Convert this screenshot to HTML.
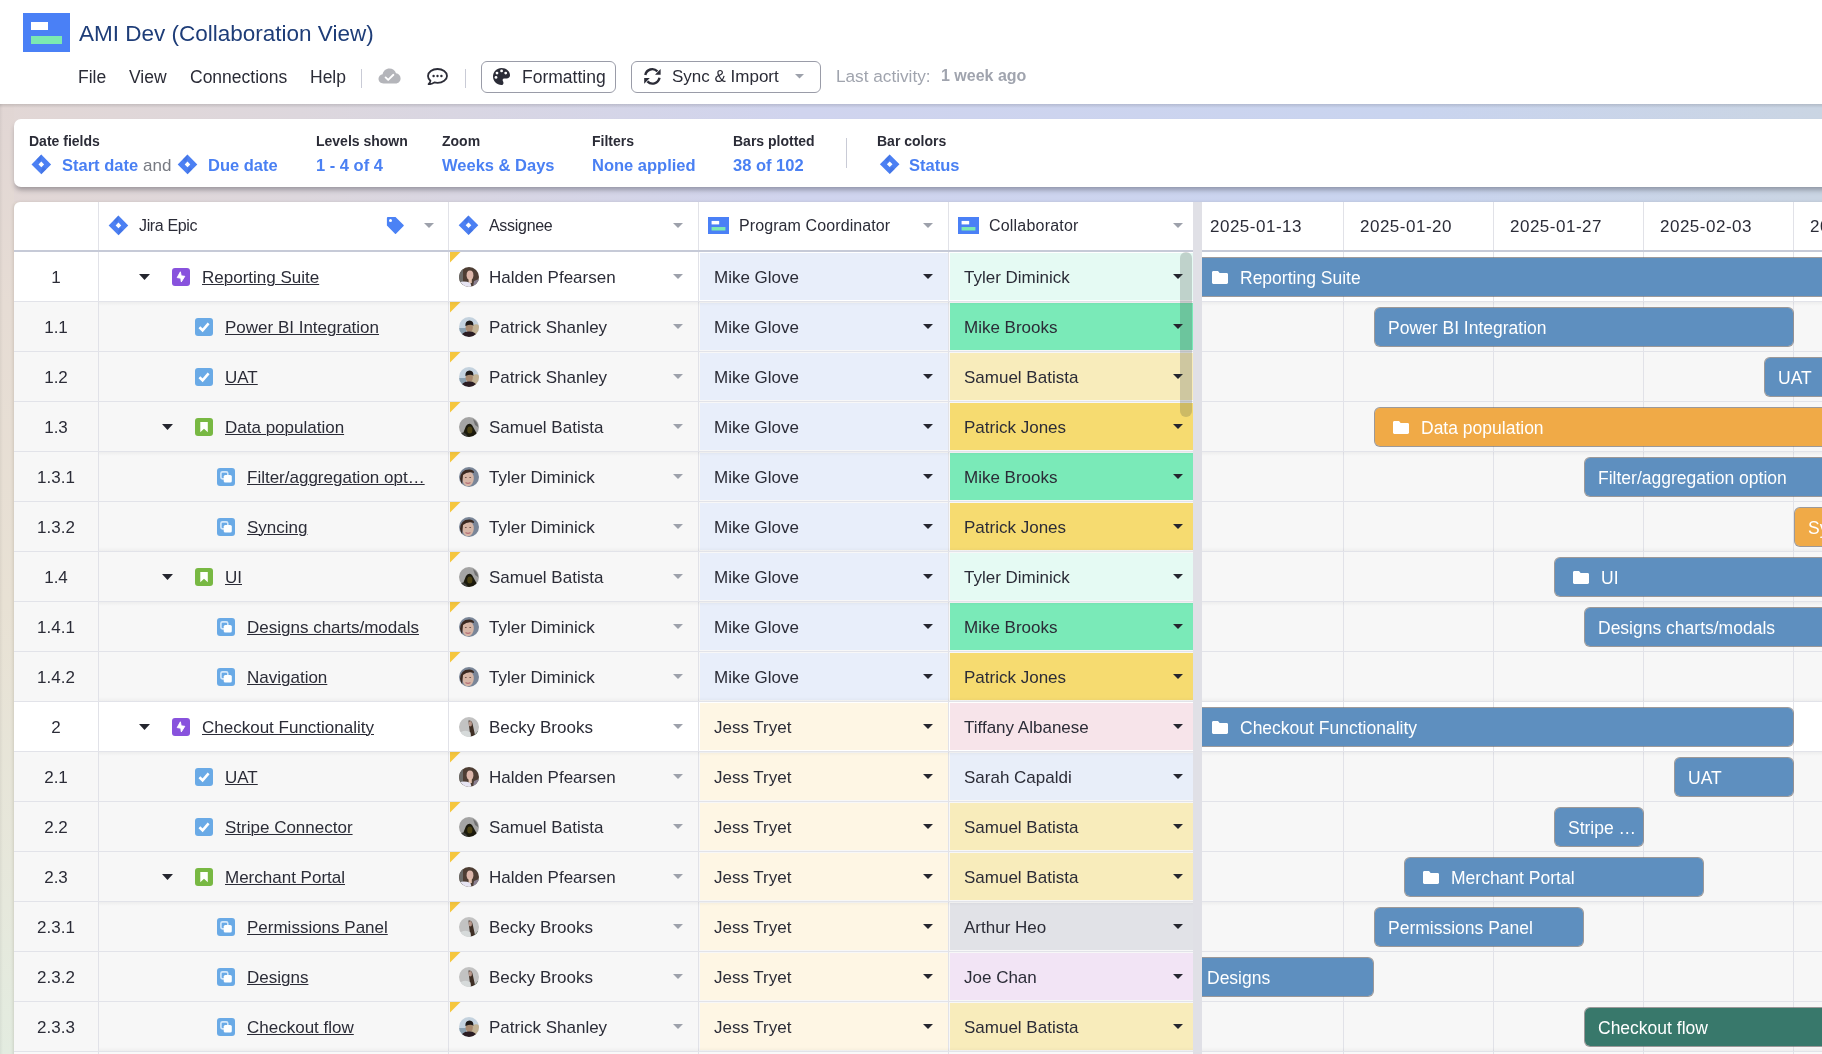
<!DOCTYPE html><html><head><meta charset="utf-8"><style>
*{box-sizing:border-box;margin:0;padding:0}
html,body{width:1822px;height:1054px;overflow:hidden;background:#fff;font-family:"Liberation Sans", sans-serif;color:#2b2c37}
#root{position:absolute;left:0;top:0;width:1822px;height:1054px;overflow:hidden;will-change:transform}
.abs{position:absolute}
.t{position:absolute;white-space:nowrap}
</style></head><body><div id="root"><div class="abs" style="left:0;top:104px;width:1822px;height:950px;background:linear-gradient(180deg,#e4d9d6 0px,#e7ddd5 200px,#e8e1d4 500px,#e6e8dc 800px,#e3ece0 950px)"></div><div class="abs" style="left:0;top:104px;width:1822px;height:98px;background:linear-gradient(90deg,#e2d7d5 0px,#ddd7dd 300px,#d0d4ee 800px,#c9d4ef 1400px,#cad5e3 1822px)"></div><div class="abs" style="left:0;top:104px;width:14px;height:950px;background:linear-gradient(180deg,#e1d6d4 0px,#e6dcd4 200px,#e8e1d4 500px,#e6e8dc 800px,#e3ece0 950px)"></div><div class="abs" style="left:0;top:104px;width:3px;height:950px;background:linear-gradient(90deg,rgba(0,0,0,.05),rgba(0,0,0,0))"></div><div class="abs" style="left:0;top:104px;width:1822px;height:4px;background:linear-gradient(180deg,rgba(0,0,0,.12),rgba(0,0,0,0))"></div><svg style="position:absolute;left:23px;top:13px" width="47" height="39" viewBox="0 0 47 39" preserveAspectRatio="none"><rect width="47" height="39" fill="#4a80f6"/><rect x="8" y="9" width="17" height="8" fill="#fff"/><rect x="8" y="23" width="31" height="8" fill="#7be9b2"/></svg><div class="t" style="left:79px;top:21px;font-size:22.5px;line-height:26px;color:#1e3d78">AMI Dev (Collaboration View)</div><div class="t" style="left:78px;top:67px;font-size:17.5px;line-height:20px;color:#2b2c37">File</div><div class="t" style="left:129px;top:67px;font-size:17.5px;line-height:20px;color:#2b2c37">View</div><div class="t" style="left:190px;top:67px;font-size:17.5px;line-height:20px;color:#2b2c37">Connections</div><div class="t" style="left:310px;top:67px;font-size:17.5px;line-height:20px;color:#2b2c37">Help</div><div class="abs" style="left:361px;top:69px;width:1px;height:19px;background:#c9cbd6"></div><div class="abs" style="left:465px;top:69px;width:1px;height:19px;background:#c9cbd6"></div><svg style="position:absolute;left:378px;top:68px" width="23" height="16" viewBox="0 0 23 16"><path d="M5.5 15.5 C2.5 15.5 0.5 13.4 0.5 10.8 C0.5 8.4 2.3 6.5 4.6 6.2 C5.2 2.9 8 0.5 11.4 0.5 C14.5 0.5 17.1 2.5 18 5.3 C20.7 5.6 22.6 7.8 22.6 10.5 C22.6 13.3 20.4 15.5 17.6 15.5 Z" fill="#b4b5ba"/><path d="M7.6 9.4 L10.2 11.9 L15.4 6.8" stroke="#fff" stroke-width="1.9" fill="none" stroke-linecap="round" stroke-linejoin="round"/></svg><svg style="position:absolute;left:427px;top:68px" width="21" height="17" viewBox="0 0 21 17"><path d="M10.5 1 C15.7 1 20 4.1 20 7.9 C20 11.7 15.7 14.8 10.5 14.8 C9.4 14.8 8.4 14.7 7.4 14.4 C6 15.5 3.9 16.2 1.6 16.2 C2.6 15.2 3.2 14.1 3.4 12.8 C1.9 11.5 1 9.8 1 7.9 C1 4.1 5.3 1 10.5 1 Z" fill="none" stroke="#2b2c37" stroke-width="1.8" stroke-linejoin="round"/><circle cx="6.6" cy="8" r="1.2" fill="#2b2c37"/><circle cx="10.5" cy="8" r="1.2" fill="#2b2c37"/><circle cx="14.4" cy="8" r="1.2" fill="#2b2c37"/></svg><div class="abs" style="left:481px;top:61px;width:135px;height:32px;border:1px solid #9a9ca8;border-radius:6px"></div><svg style="position:absolute;left:488px;top:63px" width="28" height="28" viewBox="0 0 28 28"><path d="M13.5 4.9 C18.5 4.9 22 8.3 22 12.3 C22 14.2 20.6 15.4 18.6 15.4 L16.4 15.4 C15.3 15.4 14.6 16.1 14.6 17.1 C14.6 17.6 14.9 18 15.1 18.5 C15.3 19 15.5 19.4 15.5 19.9 C15.5 21.1 14.6 22 13.5 22 C8.8 22 5 18.2 5 13.5 C5 8.8 8.8 4.9 13.5 4.9 Z" fill="#2b2c37"/><circle cx="13.6" cy="7.9" r="1.4" fill="#fff"/><circle cx="9" cy="10.1" r="1.4" fill="#fff"/><circle cx="8" cy="14.4" r="1.4" fill="#fff"/><circle cx="17.7" cy="10.1" r="1.4" fill="#fff"/></svg><div class="t" style="left:522px;top:67px;font-size:17.5px;line-height:20px;color:#2b2c37">Formatting</div><div class="abs" style="left:631px;top:61px;width:190px;height:32px;border:1px solid #9a9ca8;border-radius:6px"></div><svg style="position:absolute;left:638px;top:63px" width="28" height="28" viewBox="0 0 28 28"><path d="M7.3 12.0 A7.1 7.1 0 0 1 19.4 8.4" fill="none" stroke="#2b2c37" stroke-width="2.4"/><path d="M22.6 6.1 L22.6 11.7 L17.0 11.7 Z" fill="#2b2c37"/><path d="M21.5 14.8 A7.1 7.1 0 0 1 9.4 18.4" fill="none" stroke="#2b2c37" stroke-width="2.4"/><path d="M6.2 20.7 L6.2 15.1 L11.8 15.1 Z" fill="#2b2c37"/></svg><div class="t" style="left:672px;top:67px;font-size:17px;line-height:20px;color:#2b2c37">Sync &amp; Import</div><svg style="position:absolute;left:795px;top:74px" width="9" height="4.5" viewBox="0 0 10 5" preserveAspectRatio="none"><path d="M0 0H10L5 5Z" fill="#9da1ab"/></svg><div class="t" style="left:836px;top:66px;font-size:17.2px;line-height:20px;color:#a0a4ae">Last activity:</div><div class="t" style="left:941px;top:66px;font-size:16px;line-height:20px;color:#a0a4ae;font-weight:bold">1 week ago</div><div class="abs" style="left:14px;top:119px;width:1900px;height:68px;background:#fff;border-radius:7px;box-shadow:0 4px 5px -1px rgba(30,30,40,.34)"></div><div class="t" style="left:29px;top:132px;font-size:14px;line-height:18px;font-weight:bold;color:#2b2c37">Date fields</div><svg style="position:absolute;left:31px;top:154px" width="21" height="21" viewBox="0 0 21 21"><path d="M10.3 0.5999999999999996 L20.1 10.4 L10.3 20.200000000000003 L0.5 10.4 Z M10.3 7.6000000000000005 L7.500000000000001 10.4 L10.3 13.2 L13.100000000000001 10.4 Z" fill="#4c80f3" fill-rule="evenodd"/><path d="M10.3 0.5999999999999996 L5.4 5.5 L7.9 8.0 L10.3 5.6000000000000005Z" fill="#3a68d8" opacity=".45"/><path d="M10.3 20.200000000000003 L15.200000000000001 15.3 L12.700000000000001 12.8 L10.3 15.2Z" fill="#3a68d8" opacity=".45"/></svg><div class="t" style="left:62px;top:155px;font-size:16.5px;line-height:20px;font-weight:bold;color:#4a80f3">Start date</div><div class="t" style="left:143px;top:156px;font-size:17px;line-height:20px;color:#777a82">and</div><svg style="position:absolute;left:177px;top:154px" width="21" height="21" viewBox="0 0 21 21"><path d="M10.5 0.5999999999999996 L20.3 10.4 L10.5 20.200000000000003 L0.6999999999999993 10.4 Z M10.5 7.6000000000000005 L7.7 10.4 L10.5 13.2 L13.3 10.4 Z" fill="#4c80f3" fill-rule="evenodd"/><path d="M10.5 0.5999999999999996 L5.6 5.5 L8.1 8.0 L10.5 5.6000000000000005Z" fill="#3a68d8" opacity=".45"/><path d="M10.5 20.200000000000003 L15.4 15.3 L12.9 12.8 L10.5 15.2Z" fill="#3a68d8" opacity=".45"/></svg><div class="t" style="left:208px;top:155px;font-size:16.5px;line-height:20px;font-weight:bold;color:#4a80f3">Due date</div><div class="t" style="left:316px;top:132px;font-size:14px;line-height:18px;font-weight:bold;color:#2b2c37">Levels shown</div><div class="t" style="left:316px;top:155px;font-size:16.5px;line-height:20px;font-weight:bold;color:#4a80f3">1 - 4 of 4</div><div class="t" style="left:442px;top:132px;font-size:14px;line-height:18px;font-weight:bold;color:#2b2c37">Zoom</div><div class="t" style="left:442px;top:155px;font-size:16.5px;line-height:20px;font-weight:bold;color:#4a80f3">Weeks &amp; Days</div><div class="t" style="left:592px;top:132px;font-size:14px;line-height:18px;font-weight:bold;color:#2b2c37">Filters</div><div class="t" style="left:592px;top:155px;font-size:16.5px;line-height:20px;font-weight:bold;color:#4a80f3">None applied</div><div class="t" style="left:733px;top:132px;font-size:14px;line-height:18px;font-weight:bold;color:#2b2c37">Bars plotted</div><div class="t" style="left:733px;top:155px;font-size:16.5px;line-height:20px;font-weight:bold;color:#4a80f3">38 of 102</div><div class="abs" style="left:846px;top:138px;width:1px;height:30px;background:#c9cbd6"></div><div class="t" style="left:877px;top:132px;font-size:14px;line-height:18px;font-weight:bold;color:#2b2c37">Bar colors</div><svg style="position:absolute;left:879px;top:154px" width="21" height="21" viewBox="0 0 21 21"><path d="M10.7 0.5 L20.5 10.3 L10.7 20.1 L0.8999999999999986 10.3 Z M10.7 7.500000000000001 L7.8999999999999995 10.3 L10.7 13.100000000000001 L13.5 10.3 Z" fill="#4c80f3" fill-rule="evenodd"/><path d="M10.7 0.5 L5.799999999999999 5.4 L8.299999999999999 7.9 L10.7 5.500000000000001Z" fill="#3a68d8" opacity=".45"/><path d="M10.7 20.1 L15.6 15.200000000000001 L13.1 12.700000000000001 L10.7 15.100000000000001Z" fill="#3a68d8" opacity=".45"/></svg><div class="t" style="left:909px;top:155px;font-size:16.5px;line-height:20px;font-weight:bold;color:#4a80f3">Status</div><div class="abs" style="left:14px;top:202px;width:1900px;height:900px;background:#fff;border-radius:6px 6px 0 0;box-shadow:-1px 0 3px rgba(40,30,20,.12)"></div><div class="abs" style="left:14px;top:250px;width:1179px;height:2px;background:#c6cad7"></div><div class="abs" style="left:1202px;top:250px;width:620px;height:2px;background:#c6cad7"></div><div class="abs" style="left:98px;top:202px;width:1px;height:48px;background:#e1e2e8"></div><div class="abs" style="left:448px;top:202px;width:1px;height:48px;background:#e1e2e8"></div><div class="abs" style="left:698px;top:202px;width:1px;height:48px;background:#e1e2e8"></div><div class="abs" style="left:948px;top:202px;width:1px;height:48px;background:#e1e2e8"></div><svg style="position:absolute;left:108px;top:215px" width="21" height="21" viewBox="0 0 21 21"><path d="M10.45 0.5999999999999996 L20.25 10.4 L10.45 20.200000000000003 L0.6499999999999986 10.4 Z M10.45 7.6000000000000005 L7.6499999999999995 10.4 L10.45 13.2 L13.25 10.4 Z" fill="#4c80f3" fill-rule="evenodd"/><path d="M10.45 0.5999999999999996 L5.549999999999999 5.5 L8.049999999999999 8.0 L10.45 5.6000000000000005Z" fill="#3a68d8" opacity=".45"/><path d="M10.45 20.200000000000003 L15.35 15.3 L12.85 12.8 L10.45 15.2Z" fill="#3a68d8" opacity=".45"/></svg><div class="t" style="left:139px;top:216px;font-size:16px;letter-spacing:-0.35px;line-height:19px;color:#2b2c37">Jira Epic</div><svg style="position:absolute;left:386px;top:216px" width="19" height="19" viewBox="0 0 19 19"><path d="M0.9 1.9 Q0.9 0.9 1.9 0.9 L9.5 0.9 L17.6 9 Q18.1 9.5 17.6 10 L10 17.7 Q9.5 18.2 9 17.7 L0.9 9.5 Z" fill="#4b82f5"/><circle cx="4.5" cy="4.5" r="1.5" fill="#fff"/></svg><svg style="position:absolute;left:424px;top:223px" width="10" height="5" viewBox="0 0 10 5" preserveAspectRatio="none"><path d="M0 0H10L5 5Z" fill="#9da1ab"/></svg><svg style="position:absolute;left:458px;top:215px" width="21" height="21" viewBox="0 0 21 21"><path d="M10.5 0.5 L20.3 10.3 L10.5 20.1 L0.6999999999999993 10.3 Z M10.5 7.500000000000001 L7.7 10.3 L10.5 13.100000000000001 L13.3 10.3 Z" fill="#4c80f3" fill-rule="evenodd"/><path d="M10.5 0.5 L5.6 5.4 L8.1 7.9 L10.5 5.500000000000001Z" fill="#3a68d8" opacity=".45"/><path d="M10.5 20.1 L15.4 15.200000000000001 L12.9 12.700000000000001 L10.5 15.100000000000001Z" fill="#3a68d8" opacity=".45"/></svg><div class="t" style="left:489px;top:216px;font-size:16px;letter-spacing:-0.3px;line-height:19px;color:#2b2c37">Assignee</div><svg style="position:absolute;left:673px;top:223px" width="10" height="5" viewBox="0 0 10 5" preserveAspectRatio="none"><path d="M0 0H10L5 5Z" fill="#9da1ab"/></svg><svg style="position:absolute;left:708px;top:217px" width="21" height="17" viewBox="0 0 47 39" preserveAspectRatio="none"><rect width="47" height="39" fill="#4a80f6"/><rect x="8" y="9" width="17" height="8" fill="#fff"/><rect x="8" y="23" width="31" height="8" fill="#7be9b2"/></svg><div class="t" style="left:739px;top:216px;font-size:16px;letter-spacing:0.1px;line-height:19px;color:#2b2c37">Program Coordinator</div><svg style="position:absolute;left:923px;top:223px" width="10" height="5" viewBox="0 0 10 5" preserveAspectRatio="none"><path d="M0 0H10L5 5Z" fill="#9da1ab"/></svg><svg style="position:absolute;left:958px;top:217px" width="21" height="17" viewBox="0 0 47 39" preserveAspectRatio="none"><rect width="47" height="39" fill="#4a80f6"/><rect x="8" y="9" width="17" height="8" fill="#fff"/><rect x="8" y="23" width="31" height="8" fill="#7be9b2"/></svg><div class="t" style="left:989px;top:216px;font-size:16px;letter-spacing:0.2px;line-height:19px;color:#2b2c37">Collaborator</div><svg style="position:absolute;left:1173px;top:223px" width="10" height="5" viewBox="0 0 10 5" preserveAspectRatio="none"><path d="M0 0H10L5 5Z" fill="#9da1ab"/></svg><div class="t" style="left:1210px;top:217px;font-size:17px;letter-spacing:0.5px;line-height:20px;color:#2b2c37">2025-01-13</div><div class="t" style="left:1360px;top:217px;font-size:17px;letter-spacing:0.5px;line-height:20px;color:#2b2c37">2025-01-20</div><div class="abs" style="left:1343px;top:202px;width:1px;height:48px;background:#e1e2e8"></div><div class="t" style="left:1510px;top:217px;font-size:17px;letter-spacing:0.5px;line-height:20px;color:#2b2c37">2025-01-27</div><div class="abs" style="left:1493px;top:202px;width:1px;height:48px;background:#e1e2e8"></div><div class="t" style="left:1660px;top:217px;font-size:17px;letter-spacing:0.5px;line-height:20px;color:#2b2c37">2025-02-03</div><div class="abs" style="left:1643px;top:202px;width:1px;height:48px;background:#e1e2e8"></div><div class="t" style="left:1810px;top:217px;font-size:17px;letter-spacing:0.5px;line-height:20px;color:#2b2c37">2025-02-10</div><div class="abs" style="left:1793px;top:202px;width:1px;height:48px;background:#e1e2e8"></div><svg width="0" height="0" style="position:absolute"><defs>
<clipPath id="avc"><circle cx="10" cy="10" r="10"/></clipPath>
<symbol id="av0" viewBox="0 0 20 20"><g clip-path="url(#avc)"><rect width="20" height="20" fill="#4e3e34"/><rect x="0" y="0" width="4" height="20" fill="#6a6a68"/><ellipse cx="11" cy="8.2" rx="3.4" ry="4.6" fill="#dcb6aa"/><rect x="9.6" y="11" width="3.2" height="5" fill="#e2c0ac"/><path d="M0 15.5 Q5 13.5 11.5 16 L12.5 20 H0 Z" fill="#e6e4f2"/><path d="M15 14 L20 12 V20 H14Z" fill="#8a8090"/></g></symbol>
<symbol id="av1" viewBox="0 0 20 20"><g clip-path="url(#avc)"><rect width="20" height="20" fill="#c4d2de"/><path d="M11 20 L13 9 Q16 6 20 8 V20Z" fill="#c2b294"/><rect x="0" y="11" width="7" height="9" fill="#8aa0b0"/><ellipse cx="10.2" cy="10.6" rx="3.6" ry="4.4" fill="#a88a70"/><path d="M6.4 9 Q6 3.5 10.5 3.4 Q15 3.5 14.3 9 Q12.5 6.5 6.4 9Z" fill="#1e1a18"/><path d="M1 20 Q4 14 10 14.5 Q16 14 19 20Z" fill="#2a1c22"/></g></symbol>
<symbol id="av2" viewBox="0 0 20 20"><g clip-path="url(#avc)"><rect width="20" height="20" fill="#a4a4a4"/><path d="M14 2 Q19 5 19 10 L16 8Z" fill="#707070"/><path d="M3 19 L7 9 Q10 5 13 8 L18 17 V20 H3Z" fill="#1c1a0c"/><ellipse cx="10.8" cy="13" rx="2.6" ry="3.6" fill="#4c4214"/><path d="M2 16 Q6 14 9 20 H2Z" fill="#3c3c3a"/></g></symbol>
<symbol id="av3" viewBox="0 0 20 20"><g clip-path="url(#avc)"><rect width="20" height="20" fill="#7a8698"/><ellipse cx="9" cy="11.5" rx="5.8" ry="7.8" fill="#d6b6a6"/><path d="M1 12 Q1.5 2 11 2.5 Q15.5 3 15 6 Q9 3.6 4 8 L3 18Z" fill="#3a2a22"/><path d="M6.5 15.5 Q9 17.2 11.5 15.5" stroke="#b87078" stroke-width="1.2" fill="none"/><ellipse cx="6.8" cy="10.5" rx="1" ry=".6" fill="#6a5048"/><ellipse cx="11.2" cy="10.5" rx="1" ry=".6" fill="#6a5048"/></g></symbol>
<symbol id="av4" viewBox="0 0 20 20"><g clip-path="url(#avc)"><rect width="20" height="20" fill="#c2c2c2"/><path d="M9.5 3.5 Q13 3 13.6 7 L16 18 L11.5 20 L10 9Z" fill="#3e2e24"/><ellipse cx="11.3" cy="6.8" rx="1.7" ry="2.7" fill="#b8988c"/><path d="M2 15 Q7 12.5 11.5 15.5 L12 20 H2Z" fill="#d6dada"/><path d="M14 20 L19 14 V20Z" fill="#2a4a30"/></g></symbol>
</defs></svg><div class="abs" style="left:14px;top:252px;width:1179px;height:49px;background:#ffffff"></div><div class="abs" style="left:1202px;top:252px;width:620px;height:49px;background:#ffffff"></div><div class="abs" style="left:14px;top:301px;width:1179px;height:1px;background:#e2e3e9"></div><div class="abs" style="left:1202px;top:301px;width:620px;height:1px;background:#e2e3e9"></div><div class="abs" style="left:98px;top:252px;width:1px;height:49px;background:#e1e2e8"></div><div class="abs" style="left:448px;top:252px;width:1px;height:49px;background:#e1e2e8"></div><div class="abs" style="left:698px;top:252px;width:1px;height:49px;background:#e1e2e8"></div><div class="abs" style="left:948px;top:252px;width:1px;height:49px;background:#e1e2e8"></div><div class="abs" style="left:1343px;top:252px;width:1px;height:49px;background:#e1e2e8"></div><div class="abs" style="left:1493px;top:252px;width:1px;height:49px;background:#e1e2e8"></div><div class="abs" style="left:1643px;top:252px;width:1px;height:49px;background:#e1e2e8"></div><div class="abs" style="left:1793px;top:252px;width:1px;height:49px;background:#e1e2e8"></div><div class="t" style="left:14px;top:252px;width:84px;text-align:center;font-size:17px;line-height:51px;color:#2b2c37">1</div><svg style="position:absolute;left:139px;top:274px" width="11" height="6" viewBox="0 0 10 5" preserveAspectRatio="none"><path d="M0 0H10L5 5Z" fill="#25262f"/></svg><svg style="position:absolute;left:172px;top:268px" width="18" height="18" viewBox="0 0 18 18"><rect width="18" height="18" rx="3" fill="#8852dd"/><path d="M8.4 3.8 L5.2 9.6 L8.8 10.2 L9.3 13.9 L12.8 8.3 L9.2 7.8 Z" fill="#fff" stroke="#fff" stroke-width="0.9" stroke-linejoin="round"/></svg><div class="t" style="left:202px;top:252px;font-size:17px;line-height:51px;color:#2b2c37;text-decoration:underline;text-underline-offset:1px;text-decoration-thickness:1px">Reporting Suite</div><svg style="position:absolute;left:450px;top:252px" width="11" height="11"><path d="M0 0H10.5L0 10.5Z" fill="#f5c63f"/></svg><svg style="position:absolute;left:459px;top:267px" width="20" height="20" viewBox="0 0 20 20"><use href="#av0"/></svg><div class="t" style="left:489px;top:252px;font-size:17px;line-height:51px;color:#2b2c37">Halden Pfearsen</div><svg style="position:absolute;left:673px;top:274px" width="10" height="5" viewBox="0 0 10 5" preserveAspectRatio="none"><path d="M0 0H10L5 5Z" fill="#9da1ab"/></svg><div class="abs" style="left:700px;top:253px;width:248px;height:47px;background:#e8eefa"></div><div class="t" style="left:714px;top:252px;font-size:17px;line-height:51px;color:#2b2c37">Mike Glove</div><svg style="position:absolute;left:923px;top:274px" width="10" height="5" viewBox="0 0 10 5" preserveAspectRatio="none"><path d="M0 0H10L5 5Z" fill="#25262f"/></svg><div class="abs" style="left:950px;top:253px;width:243px;height:47px;background:#e5faf3"></div><div class="t" style="left:964px;top:252px;font-size:17px;line-height:51px;color:#2b2c37">Tyler Diminick</div><svg style="position:absolute;left:1173px;top:274px" width="10" height="5" viewBox="0 0 10 5" preserveAspectRatio="none"><path d="M0 0H10L5 5Z" fill="#25262f"/></svg><div class="abs" style="left:1193px;top:257px;width:707px;height:40px;background:#5e8fbf;border-radius:6px;border:1px solid rgba(100,96,96,.62);background-clip:padding-box;overflow:hidden"><svg style="position:absolute;left:18px;top:13px" width="16" height="13" viewBox="0 0 16 13"><path d="M0 1.5 C0 .7 .6 0 1.4 0 L5.6 0 C6 0 6.3 .2 6.5 .5 L7.6 2 L14.6 2 C15.4 2 16 2.6 16 3.4 L16 11.6 C16 12.4 15.4 13 14.6 13 L1.4 13 C.6 13 0 12.4 0 11.6 Z" fill="#fff"/></svg><div class="t" style="left:46px;top:0px;font-size:17.5px;line-height:40px;color:#fff">Reporting Suite</div></div><div class="abs" style="left:14px;top:302px;width:1179px;height:49px;background:#f7f7f7"></div><div class="abs" style="left:1202px;top:302px;width:620px;height:49px;background:#f7f7f7"></div><div class="abs" style="left:14px;top:351px;width:1179px;height:1px;background:#e2e3e9"></div><div class="abs" style="left:1202px;top:351px;width:620px;height:1px;background:#e2e3e9"></div><div class="abs" style="left:98px;top:302px;width:1px;height:49px;background:#e1e2e8"></div><div class="abs" style="left:448px;top:302px;width:1px;height:49px;background:#e1e2e8"></div><div class="abs" style="left:698px;top:302px;width:1px;height:49px;background:#e1e2e8"></div><div class="abs" style="left:948px;top:302px;width:1px;height:49px;background:#e1e2e8"></div><div class="abs" style="left:1343px;top:302px;width:1px;height:49px;background:#e1e2e8"></div><div class="abs" style="left:1493px;top:302px;width:1px;height:49px;background:#e1e2e8"></div><div class="abs" style="left:1643px;top:302px;width:1px;height:49px;background:#e1e2e8"></div><div class="abs" style="left:1793px;top:302px;width:1px;height:49px;background:#e1e2e8"></div><div class="t" style="left:14px;top:302px;width:84px;text-align:center;font-size:17px;line-height:51px;color:#2b2c37">1.1</div><svg style="position:absolute;left:195px;top:318px" width="18" height="18" viewBox="0 0 18 18"><rect width="18" height="18" rx="3" fill="#6aaae6"/><path d="M4.4 9.3 L7.6 12.3 L13.6 5.3" stroke="#fff" stroke-width="2.6" fill="none"/></svg><div class="t" style="left:225px;top:302px;font-size:17px;line-height:51px;color:#2b2c37;text-decoration:underline;text-underline-offset:1px;text-decoration-thickness:1px">Power BI Integration</div><svg style="position:absolute;left:450px;top:302px" width="11" height="11"><path d="M0 0H10.5L0 10.5Z" fill="#f5c63f"/></svg><svg style="position:absolute;left:459px;top:317px" width="20" height="20" viewBox="0 0 20 20"><use href="#av1"/></svg><div class="t" style="left:489px;top:302px;font-size:17px;line-height:51px;color:#2b2c37">Patrick Shanley</div><svg style="position:absolute;left:673px;top:324px" width="10" height="5" viewBox="0 0 10 5" preserveAspectRatio="none"><path d="M0 0H10L5 5Z" fill="#9da1ab"/></svg><div class="abs" style="left:700px;top:303px;width:248px;height:47px;background:#e8eefa"></div><div class="t" style="left:714px;top:302px;font-size:17px;line-height:51px;color:#2b2c37">Mike Glove</div><svg style="position:absolute;left:923px;top:324px" width="10" height="5" viewBox="0 0 10 5" preserveAspectRatio="none"><path d="M0 0H10L5 5Z" fill="#25262f"/></svg><div class="abs" style="left:950px;top:303px;width:243px;height:47px;background:#7aeab8"></div><div class="t" style="left:964px;top:302px;font-size:17px;line-height:51px;color:#2b2c37">Mike Brooks</div><svg style="position:absolute;left:1173px;top:324px" width="10" height="5" viewBox="0 0 10 5" preserveAspectRatio="none"><path d="M0 0H10L5 5Z" fill="#25262f"/></svg><div class="abs" style="left:1374px;top:307px;width:420px;height:40px;background:#5e8fbf;border-radius:6px;border:1px solid rgba(100,96,96,.62);background-clip:padding-box;overflow:hidden"><div class="t" style="left:13px;top:0px;font-size:17.5px;line-height:40px;color:#fff">Power BI Integration</div></div><div class="abs" style="left:14px;top:352px;width:1179px;height:49px;background:#f7f7f7"></div><div class="abs" style="left:1202px;top:352px;width:620px;height:49px;background:#f7f7f7"></div><div class="abs" style="left:14px;top:401px;width:1179px;height:1px;background:#e2e3e9"></div><div class="abs" style="left:1202px;top:401px;width:620px;height:1px;background:#e2e3e9"></div><div class="abs" style="left:98px;top:352px;width:1px;height:49px;background:#e1e2e8"></div><div class="abs" style="left:448px;top:352px;width:1px;height:49px;background:#e1e2e8"></div><div class="abs" style="left:698px;top:352px;width:1px;height:49px;background:#e1e2e8"></div><div class="abs" style="left:948px;top:352px;width:1px;height:49px;background:#e1e2e8"></div><div class="abs" style="left:1343px;top:352px;width:1px;height:49px;background:#e1e2e8"></div><div class="abs" style="left:1493px;top:352px;width:1px;height:49px;background:#e1e2e8"></div><div class="abs" style="left:1643px;top:352px;width:1px;height:49px;background:#e1e2e8"></div><div class="abs" style="left:1793px;top:352px;width:1px;height:49px;background:#e1e2e8"></div><div class="t" style="left:14px;top:352px;width:84px;text-align:center;font-size:17px;line-height:51px;color:#2b2c37">1.2</div><svg style="position:absolute;left:195px;top:368px" width="18" height="18" viewBox="0 0 18 18"><rect width="18" height="18" rx="3" fill="#6aaae6"/><path d="M4.4 9.3 L7.6 12.3 L13.6 5.3" stroke="#fff" stroke-width="2.6" fill="none"/></svg><div class="t" style="left:225px;top:352px;font-size:17px;line-height:51px;color:#2b2c37;text-decoration:underline;text-underline-offset:1px;text-decoration-thickness:1px">UAT</div><svg style="position:absolute;left:450px;top:352px" width="11" height="11"><path d="M0 0H10.5L0 10.5Z" fill="#f5c63f"/></svg><svg style="position:absolute;left:459px;top:367px" width="20" height="20" viewBox="0 0 20 20"><use href="#av1"/></svg><div class="t" style="left:489px;top:352px;font-size:17px;line-height:51px;color:#2b2c37">Patrick Shanley</div><svg style="position:absolute;left:673px;top:374px" width="10" height="5" viewBox="0 0 10 5" preserveAspectRatio="none"><path d="M0 0H10L5 5Z" fill="#9da1ab"/></svg><div class="abs" style="left:700px;top:353px;width:248px;height:47px;background:#e8eefa"></div><div class="t" style="left:714px;top:352px;font-size:17px;line-height:51px;color:#2b2c37">Mike Glove</div><svg style="position:absolute;left:923px;top:374px" width="10" height="5" viewBox="0 0 10 5" preserveAspectRatio="none"><path d="M0 0H10L5 5Z" fill="#25262f"/></svg><div class="abs" style="left:950px;top:353px;width:243px;height:47px;background:#f8ecbb"></div><div class="t" style="left:964px;top:352px;font-size:17px;line-height:51px;color:#2b2c37">Samuel Batista</div><svg style="position:absolute;left:1173px;top:374px" width="10" height="5" viewBox="0 0 10 5" preserveAspectRatio="none"><path d="M0 0H10L5 5Z" fill="#25262f"/></svg><div class="abs" style="left:1764px;top:357px;width:136px;height:40px;background:#5e8fbf;border-radius:6px;border:1px solid rgba(100,96,96,.62);background-clip:padding-box;overflow:hidden"><div class="t" style="left:13px;top:0px;font-size:17.5px;line-height:40px;color:#fff">UAT</div></div><div class="abs" style="left:14px;top:402px;width:1179px;height:49px;background:#f7f7f7"></div><div class="abs" style="left:1202px;top:402px;width:620px;height:49px;background:#f7f7f7"></div><div class="abs" style="left:14px;top:451px;width:1179px;height:1px;background:#e2e3e9"></div><div class="abs" style="left:1202px;top:451px;width:620px;height:1px;background:#e2e3e9"></div><div class="abs" style="left:98px;top:402px;width:1px;height:49px;background:#e1e2e8"></div><div class="abs" style="left:448px;top:402px;width:1px;height:49px;background:#e1e2e8"></div><div class="abs" style="left:698px;top:402px;width:1px;height:49px;background:#e1e2e8"></div><div class="abs" style="left:948px;top:402px;width:1px;height:49px;background:#e1e2e8"></div><div class="abs" style="left:1343px;top:402px;width:1px;height:49px;background:#e1e2e8"></div><div class="abs" style="left:1493px;top:402px;width:1px;height:49px;background:#e1e2e8"></div><div class="abs" style="left:1643px;top:402px;width:1px;height:49px;background:#e1e2e8"></div><div class="abs" style="left:1793px;top:402px;width:1px;height:49px;background:#e1e2e8"></div><div class="t" style="left:14px;top:402px;width:84px;text-align:center;font-size:17px;line-height:51px;color:#2b2c37">1.3</div><svg style="position:absolute;left:162px;top:424px" width="11" height="6" viewBox="0 0 10 5" preserveAspectRatio="none"><path d="M0 0H10L5 5Z" fill="#25262f"/></svg><svg style="position:absolute;left:195px;top:418px" width="18" height="18" viewBox="0 0 18 18"><rect width="18" height="18" rx="3" fill="#78b843"/><path d="M5.3 4 H12.8 V14.2 L9 10.8 L5.3 14.2 Z" fill="#fff"/></svg><div class="t" style="left:225px;top:402px;font-size:17px;line-height:51px;color:#2b2c37;text-decoration:underline;text-underline-offset:1px;text-decoration-thickness:1px">Data population</div><svg style="position:absolute;left:450px;top:402px" width="11" height="11"><path d="M0 0H10.5L0 10.5Z" fill="#f5c63f"/></svg><svg style="position:absolute;left:459px;top:417px" width="20" height="20" viewBox="0 0 20 20"><use href="#av2"/></svg><div class="t" style="left:489px;top:402px;font-size:17px;line-height:51px;color:#2b2c37">Samuel Batista</div><svg style="position:absolute;left:673px;top:424px" width="10" height="5" viewBox="0 0 10 5" preserveAspectRatio="none"><path d="M0 0H10L5 5Z" fill="#9da1ab"/></svg><div class="abs" style="left:700px;top:403px;width:248px;height:47px;background:#e8eefa"></div><div class="t" style="left:714px;top:402px;font-size:17px;line-height:51px;color:#2b2c37">Mike Glove</div><svg style="position:absolute;left:923px;top:424px" width="10" height="5" viewBox="0 0 10 5" preserveAspectRatio="none"><path d="M0 0H10L5 5Z" fill="#25262f"/></svg><div class="abs" style="left:950px;top:403px;width:243px;height:47px;background:#f6db70"></div><div class="t" style="left:964px;top:402px;font-size:17px;line-height:51px;color:#2b2c37">Patrick Jones</div><svg style="position:absolute;left:1173px;top:424px" width="10" height="5" viewBox="0 0 10 5" preserveAspectRatio="none"><path d="M0 0H10L5 5Z" fill="#25262f"/></svg><div class="abs" style="left:1374px;top:407px;width:526px;height:40px;background:#f0aa47;border-radius:6px;border:1px solid rgba(100,96,96,.62);background-clip:padding-box;overflow:hidden"><svg style="position:absolute;left:18px;top:13px" width="16" height="13" viewBox="0 0 16 13"><path d="M0 1.5 C0 .7 .6 0 1.4 0 L5.6 0 C6 0 6.3 .2 6.5 .5 L7.6 2 L14.6 2 C15.4 2 16 2.6 16 3.4 L16 11.6 C16 12.4 15.4 13 14.6 13 L1.4 13 C.6 13 0 12.4 0 11.6 Z" fill="#fff"/></svg><div class="t" style="left:46px;top:0px;font-size:17.5px;line-height:40px;color:#fff">Data population</div></div><div class="abs" style="left:14px;top:452px;width:1179px;height:49px;background:#f7f7f7"></div><div class="abs" style="left:1202px;top:452px;width:620px;height:49px;background:#f7f7f7"></div><div class="abs" style="left:14px;top:501px;width:1179px;height:1px;background:#e2e3e9"></div><div class="abs" style="left:1202px;top:501px;width:620px;height:1px;background:#e2e3e9"></div><div class="abs" style="left:98px;top:452px;width:1px;height:49px;background:#e1e2e8"></div><div class="abs" style="left:448px;top:452px;width:1px;height:49px;background:#e1e2e8"></div><div class="abs" style="left:698px;top:452px;width:1px;height:49px;background:#e1e2e8"></div><div class="abs" style="left:948px;top:452px;width:1px;height:49px;background:#e1e2e8"></div><div class="abs" style="left:1343px;top:452px;width:1px;height:49px;background:#e1e2e8"></div><div class="abs" style="left:1493px;top:452px;width:1px;height:49px;background:#e1e2e8"></div><div class="abs" style="left:1643px;top:452px;width:1px;height:49px;background:#e1e2e8"></div><div class="abs" style="left:1793px;top:452px;width:1px;height:49px;background:#e1e2e8"></div><div class="t" style="left:14px;top:452px;width:84px;text-align:center;font-size:17px;line-height:51px;color:#2b2c37">1.3.1</div><svg style="position:absolute;left:217px;top:468px" width="18" height="18" viewBox="0 0 18 18"><rect width="18" height="18" rx="3" fill="#6aaae6"/><rect x="3.9" y="3.9" width="6.9" height="7" rx="1.6" fill="none" stroke="#d6e8fa" stroke-width="1.6"/><rect x="6.7" y="6.9" width="8.1" height="7.7" rx="1.6" fill="#fff"/></svg><div class="t" style="left:247px;top:452px;font-size:17px;line-height:51px;color:#2b2c37;text-decoration:underline;text-underline-offset:1px;text-decoration-thickness:1px">Filter/aggregation opt…</div><svg style="position:absolute;left:450px;top:452px" width="11" height="11"><path d="M0 0H10.5L0 10.5Z" fill="#f5c63f"/></svg><svg style="position:absolute;left:459px;top:467px" width="20" height="20" viewBox="0 0 20 20"><use href="#av3"/></svg><div class="t" style="left:489px;top:452px;font-size:17px;line-height:51px;color:#2b2c37">Tyler Diminick</div><svg style="position:absolute;left:673px;top:474px" width="10" height="5" viewBox="0 0 10 5" preserveAspectRatio="none"><path d="M0 0H10L5 5Z" fill="#9da1ab"/></svg><div class="abs" style="left:700px;top:453px;width:248px;height:47px;background:#e8eefa"></div><div class="t" style="left:714px;top:452px;font-size:17px;line-height:51px;color:#2b2c37">Mike Glove</div><svg style="position:absolute;left:923px;top:474px" width="10" height="5" viewBox="0 0 10 5" preserveAspectRatio="none"><path d="M0 0H10L5 5Z" fill="#25262f"/></svg><div class="abs" style="left:950px;top:453px;width:243px;height:47px;background:#7aeab8"></div><div class="t" style="left:964px;top:452px;font-size:17px;line-height:51px;color:#2b2c37">Mike Brooks</div><svg style="position:absolute;left:1173px;top:474px" width="10" height="5" viewBox="0 0 10 5" preserveAspectRatio="none"><path d="M0 0H10L5 5Z" fill="#25262f"/></svg><div class="abs" style="left:1584px;top:457px;width:316px;height:40px;background:#5e8fbf;border-radius:6px;border:1px solid rgba(100,96,96,.62);background-clip:padding-box;overflow:hidden"><div class="t" style="left:13px;top:0px;font-size:17.5px;line-height:40px;color:#fff">Filter/aggregation option</div></div><div class="abs" style="left:14px;top:502px;width:1179px;height:49px;background:#f7f7f7"></div><div class="abs" style="left:1202px;top:502px;width:620px;height:49px;background:#f7f7f7"></div><div class="abs" style="left:14px;top:551px;width:1179px;height:1px;background:#e2e3e9"></div><div class="abs" style="left:1202px;top:551px;width:620px;height:1px;background:#e2e3e9"></div><div class="abs" style="left:98px;top:502px;width:1px;height:49px;background:#e1e2e8"></div><div class="abs" style="left:448px;top:502px;width:1px;height:49px;background:#e1e2e8"></div><div class="abs" style="left:698px;top:502px;width:1px;height:49px;background:#e1e2e8"></div><div class="abs" style="left:948px;top:502px;width:1px;height:49px;background:#e1e2e8"></div><div class="abs" style="left:1343px;top:502px;width:1px;height:49px;background:#e1e2e8"></div><div class="abs" style="left:1493px;top:502px;width:1px;height:49px;background:#e1e2e8"></div><div class="abs" style="left:1643px;top:502px;width:1px;height:49px;background:#e1e2e8"></div><div class="abs" style="left:1793px;top:502px;width:1px;height:49px;background:#e1e2e8"></div><div class="t" style="left:14px;top:502px;width:84px;text-align:center;font-size:17px;line-height:51px;color:#2b2c37">1.3.2</div><svg style="position:absolute;left:217px;top:518px" width="18" height="18" viewBox="0 0 18 18"><rect width="18" height="18" rx="3" fill="#6aaae6"/><rect x="3.9" y="3.9" width="6.9" height="7" rx="1.6" fill="none" stroke="#d6e8fa" stroke-width="1.6"/><rect x="6.7" y="6.9" width="8.1" height="7.7" rx="1.6" fill="#fff"/></svg><div class="t" style="left:247px;top:502px;font-size:17px;line-height:51px;color:#2b2c37;text-decoration:underline;text-underline-offset:1px;text-decoration-thickness:1px">Syncing</div><svg style="position:absolute;left:450px;top:502px" width="11" height="11"><path d="M0 0H10.5L0 10.5Z" fill="#f5c63f"/></svg><svg style="position:absolute;left:459px;top:517px" width="20" height="20" viewBox="0 0 20 20"><use href="#av3"/></svg><div class="t" style="left:489px;top:502px;font-size:17px;line-height:51px;color:#2b2c37">Tyler Diminick</div><svg style="position:absolute;left:673px;top:524px" width="10" height="5" viewBox="0 0 10 5" preserveAspectRatio="none"><path d="M0 0H10L5 5Z" fill="#9da1ab"/></svg><div class="abs" style="left:700px;top:503px;width:248px;height:47px;background:#e8eefa"></div><div class="t" style="left:714px;top:502px;font-size:17px;line-height:51px;color:#2b2c37">Mike Glove</div><svg style="position:absolute;left:923px;top:524px" width="10" height="5" viewBox="0 0 10 5" preserveAspectRatio="none"><path d="M0 0H10L5 5Z" fill="#25262f"/></svg><div class="abs" style="left:950px;top:503px;width:243px;height:47px;background:#f6db70"></div><div class="t" style="left:964px;top:502px;font-size:17px;line-height:51px;color:#2b2c37">Patrick Jones</div><svg style="position:absolute;left:1173px;top:524px" width="10" height="5" viewBox="0 0 10 5" preserveAspectRatio="none"><path d="M0 0H10L5 5Z" fill="#25262f"/></svg><div class="abs" style="left:1794px;top:507px;width:106px;height:40px;background:#f0aa47;border-radius:6px;border:1px solid rgba(100,96,96,.62);background-clip:padding-box;overflow:hidden"><div class="t" style="left:13px;top:0px;font-size:17.5px;line-height:40px;color:#fff">Syncing</div></div><div class="abs" style="left:14px;top:552px;width:1179px;height:49px;background:#f7f7f7"></div><div class="abs" style="left:1202px;top:552px;width:620px;height:49px;background:#f7f7f7"></div><div class="abs" style="left:14px;top:601px;width:1179px;height:1px;background:#e2e3e9"></div><div class="abs" style="left:1202px;top:601px;width:620px;height:1px;background:#e2e3e9"></div><div class="abs" style="left:98px;top:552px;width:1px;height:49px;background:#e1e2e8"></div><div class="abs" style="left:448px;top:552px;width:1px;height:49px;background:#e1e2e8"></div><div class="abs" style="left:698px;top:552px;width:1px;height:49px;background:#e1e2e8"></div><div class="abs" style="left:948px;top:552px;width:1px;height:49px;background:#e1e2e8"></div><div class="abs" style="left:1343px;top:552px;width:1px;height:49px;background:#e1e2e8"></div><div class="abs" style="left:1493px;top:552px;width:1px;height:49px;background:#e1e2e8"></div><div class="abs" style="left:1643px;top:552px;width:1px;height:49px;background:#e1e2e8"></div><div class="abs" style="left:1793px;top:552px;width:1px;height:49px;background:#e1e2e8"></div><div class="t" style="left:14px;top:552px;width:84px;text-align:center;font-size:17px;line-height:51px;color:#2b2c37">1.4</div><svg style="position:absolute;left:162px;top:574px" width="11" height="6" viewBox="0 0 10 5" preserveAspectRatio="none"><path d="M0 0H10L5 5Z" fill="#25262f"/></svg><svg style="position:absolute;left:195px;top:568px" width="18" height="18" viewBox="0 0 18 18"><rect width="18" height="18" rx="3" fill="#78b843"/><path d="M5.3 4 H12.8 V14.2 L9 10.8 L5.3 14.2 Z" fill="#fff"/></svg><div class="t" style="left:225px;top:552px;font-size:17px;line-height:51px;color:#2b2c37;text-decoration:underline;text-underline-offset:1px;text-decoration-thickness:1px">UI</div><svg style="position:absolute;left:450px;top:552px" width="11" height="11"><path d="M0 0H10.5L0 10.5Z" fill="#f5c63f"/></svg><svg style="position:absolute;left:459px;top:567px" width="20" height="20" viewBox="0 0 20 20"><use href="#av2"/></svg><div class="t" style="left:489px;top:552px;font-size:17px;line-height:51px;color:#2b2c37">Samuel Batista</div><svg style="position:absolute;left:673px;top:574px" width="10" height="5" viewBox="0 0 10 5" preserveAspectRatio="none"><path d="M0 0H10L5 5Z" fill="#9da1ab"/></svg><div class="abs" style="left:700px;top:553px;width:248px;height:47px;background:#e8eefa"></div><div class="t" style="left:714px;top:552px;font-size:17px;line-height:51px;color:#2b2c37">Mike Glove</div><svg style="position:absolute;left:923px;top:574px" width="10" height="5" viewBox="0 0 10 5" preserveAspectRatio="none"><path d="M0 0H10L5 5Z" fill="#25262f"/></svg><div class="abs" style="left:950px;top:553px;width:243px;height:47px;background:#e5faf3"></div><div class="t" style="left:964px;top:552px;font-size:17px;line-height:51px;color:#2b2c37">Tyler Diminick</div><svg style="position:absolute;left:1173px;top:574px" width="10" height="5" viewBox="0 0 10 5" preserveAspectRatio="none"><path d="M0 0H10L5 5Z" fill="#25262f"/></svg><div class="abs" style="left:1554px;top:557px;width:346px;height:40px;background:#5e8fbf;border-radius:6px;border:1px solid rgba(100,96,96,.62);background-clip:padding-box;overflow:hidden"><svg style="position:absolute;left:18px;top:13px" width="16" height="13" viewBox="0 0 16 13"><path d="M0 1.5 C0 .7 .6 0 1.4 0 L5.6 0 C6 0 6.3 .2 6.5 .5 L7.6 2 L14.6 2 C15.4 2 16 2.6 16 3.4 L16 11.6 C16 12.4 15.4 13 14.6 13 L1.4 13 C.6 13 0 12.4 0 11.6 Z" fill="#fff"/></svg><div class="t" style="left:46px;top:0px;font-size:17.5px;line-height:40px;color:#fff">UI</div></div><div class="abs" style="left:14px;top:602px;width:1179px;height:49px;background:#f7f7f7"></div><div class="abs" style="left:1202px;top:602px;width:620px;height:49px;background:#f7f7f7"></div><div class="abs" style="left:14px;top:651px;width:1179px;height:1px;background:#e2e3e9"></div><div class="abs" style="left:1202px;top:651px;width:620px;height:1px;background:#e2e3e9"></div><div class="abs" style="left:98px;top:602px;width:1px;height:49px;background:#e1e2e8"></div><div class="abs" style="left:448px;top:602px;width:1px;height:49px;background:#e1e2e8"></div><div class="abs" style="left:698px;top:602px;width:1px;height:49px;background:#e1e2e8"></div><div class="abs" style="left:948px;top:602px;width:1px;height:49px;background:#e1e2e8"></div><div class="abs" style="left:1343px;top:602px;width:1px;height:49px;background:#e1e2e8"></div><div class="abs" style="left:1493px;top:602px;width:1px;height:49px;background:#e1e2e8"></div><div class="abs" style="left:1643px;top:602px;width:1px;height:49px;background:#e1e2e8"></div><div class="abs" style="left:1793px;top:602px;width:1px;height:49px;background:#e1e2e8"></div><div class="t" style="left:14px;top:602px;width:84px;text-align:center;font-size:17px;line-height:51px;color:#2b2c37">1.4.1</div><svg style="position:absolute;left:217px;top:618px" width="18" height="18" viewBox="0 0 18 18"><rect width="18" height="18" rx="3" fill="#6aaae6"/><rect x="3.9" y="3.9" width="6.9" height="7" rx="1.6" fill="none" stroke="#d6e8fa" stroke-width="1.6"/><rect x="6.7" y="6.9" width="8.1" height="7.7" rx="1.6" fill="#fff"/></svg><div class="t" style="left:247px;top:602px;font-size:17px;line-height:51px;color:#2b2c37;text-decoration:underline;text-underline-offset:1px;text-decoration-thickness:1px">Designs charts/modals</div><svg style="position:absolute;left:450px;top:602px" width="11" height="11"><path d="M0 0H10.5L0 10.5Z" fill="#f5c63f"/></svg><svg style="position:absolute;left:459px;top:617px" width="20" height="20" viewBox="0 0 20 20"><use href="#av3"/></svg><div class="t" style="left:489px;top:602px;font-size:17px;line-height:51px;color:#2b2c37">Tyler Diminick</div><svg style="position:absolute;left:673px;top:624px" width="10" height="5" viewBox="0 0 10 5" preserveAspectRatio="none"><path d="M0 0H10L5 5Z" fill="#9da1ab"/></svg><div class="abs" style="left:700px;top:603px;width:248px;height:47px;background:#e8eefa"></div><div class="t" style="left:714px;top:602px;font-size:17px;line-height:51px;color:#2b2c37">Mike Glove</div><svg style="position:absolute;left:923px;top:624px" width="10" height="5" viewBox="0 0 10 5" preserveAspectRatio="none"><path d="M0 0H10L5 5Z" fill="#25262f"/></svg><div class="abs" style="left:950px;top:603px;width:243px;height:47px;background:#7aeab8"></div><div class="t" style="left:964px;top:602px;font-size:17px;line-height:51px;color:#2b2c37">Mike Brooks</div><svg style="position:absolute;left:1173px;top:624px" width="10" height="5" viewBox="0 0 10 5" preserveAspectRatio="none"><path d="M0 0H10L5 5Z" fill="#25262f"/></svg><div class="abs" style="left:1584px;top:607px;width:316px;height:40px;background:#5e8fbf;border-radius:6px;border:1px solid rgba(100,96,96,.62);background-clip:padding-box;overflow:hidden"><div class="t" style="left:13px;top:0px;font-size:17.5px;line-height:40px;color:#fff">Designs charts/modals</div></div><div class="abs" style="left:14px;top:652px;width:1179px;height:49px;background:#f7f7f7"></div><div class="abs" style="left:1202px;top:652px;width:620px;height:49px;background:#f7f7f7"></div><div class="abs" style="left:14px;top:701px;width:1179px;height:1px;background:#e2e3e9"></div><div class="abs" style="left:1202px;top:701px;width:620px;height:1px;background:#e2e3e9"></div><div class="abs" style="left:98px;top:652px;width:1px;height:49px;background:#e1e2e8"></div><div class="abs" style="left:448px;top:652px;width:1px;height:49px;background:#e1e2e8"></div><div class="abs" style="left:698px;top:652px;width:1px;height:49px;background:#e1e2e8"></div><div class="abs" style="left:948px;top:652px;width:1px;height:49px;background:#e1e2e8"></div><div class="abs" style="left:1343px;top:652px;width:1px;height:49px;background:#e1e2e8"></div><div class="abs" style="left:1493px;top:652px;width:1px;height:49px;background:#e1e2e8"></div><div class="abs" style="left:1643px;top:652px;width:1px;height:49px;background:#e1e2e8"></div><div class="abs" style="left:1793px;top:652px;width:1px;height:49px;background:#e1e2e8"></div><div class="t" style="left:14px;top:652px;width:84px;text-align:center;font-size:17px;line-height:51px;color:#2b2c37">1.4.2</div><svg style="position:absolute;left:217px;top:668px" width="18" height="18" viewBox="0 0 18 18"><rect width="18" height="18" rx="3" fill="#6aaae6"/><rect x="3.9" y="3.9" width="6.9" height="7" rx="1.6" fill="none" stroke="#d6e8fa" stroke-width="1.6"/><rect x="6.7" y="6.9" width="8.1" height="7.7" rx="1.6" fill="#fff"/></svg><div class="t" style="left:247px;top:652px;font-size:17px;line-height:51px;color:#2b2c37;text-decoration:underline;text-underline-offset:1px;text-decoration-thickness:1px">Navigation</div><svg style="position:absolute;left:450px;top:652px" width="11" height="11"><path d="M0 0H10.5L0 10.5Z" fill="#f5c63f"/></svg><svg style="position:absolute;left:459px;top:667px" width="20" height="20" viewBox="0 0 20 20"><use href="#av3"/></svg><div class="t" style="left:489px;top:652px;font-size:17px;line-height:51px;color:#2b2c37">Tyler Diminick</div><svg style="position:absolute;left:673px;top:674px" width="10" height="5" viewBox="0 0 10 5" preserveAspectRatio="none"><path d="M0 0H10L5 5Z" fill="#9da1ab"/></svg><div class="abs" style="left:700px;top:653px;width:248px;height:47px;background:#e8eefa"></div><div class="t" style="left:714px;top:652px;font-size:17px;line-height:51px;color:#2b2c37">Mike Glove</div><svg style="position:absolute;left:923px;top:674px" width="10" height="5" viewBox="0 0 10 5" preserveAspectRatio="none"><path d="M0 0H10L5 5Z" fill="#25262f"/></svg><div class="abs" style="left:950px;top:653px;width:243px;height:47px;background:#f6db70"></div><div class="t" style="left:964px;top:652px;font-size:17px;line-height:51px;color:#2b2c37">Patrick Jones</div><svg style="position:absolute;left:1173px;top:674px" width="10" height="5" viewBox="0 0 10 5" preserveAspectRatio="none"><path d="M0 0H10L5 5Z" fill="#25262f"/></svg><div class="abs" style="left:14px;top:702px;width:1179px;height:49px;background:#ffffff"></div><div class="abs" style="left:1202px;top:702px;width:620px;height:49px;background:#ffffff"></div><div class="abs" style="left:14px;top:751px;width:1179px;height:1px;background:#e2e3e9"></div><div class="abs" style="left:1202px;top:751px;width:620px;height:1px;background:#e2e3e9"></div><div class="abs" style="left:98px;top:702px;width:1px;height:49px;background:#e1e2e8"></div><div class="abs" style="left:448px;top:702px;width:1px;height:49px;background:#e1e2e8"></div><div class="abs" style="left:698px;top:702px;width:1px;height:49px;background:#e1e2e8"></div><div class="abs" style="left:948px;top:702px;width:1px;height:49px;background:#e1e2e8"></div><div class="abs" style="left:1343px;top:702px;width:1px;height:49px;background:#e1e2e8"></div><div class="abs" style="left:1493px;top:702px;width:1px;height:49px;background:#e1e2e8"></div><div class="abs" style="left:1643px;top:702px;width:1px;height:49px;background:#e1e2e8"></div><div class="abs" style="left:1793px;top:702px;width:1px;height:49px;background:#e1e2e8"></div><div class="t" style="left:14px;top:702px;width:84px;text-align:center;font-size:17px;line-height:51px;color:#2b2c37">2</div><svg style="position:absolute;left:139px;top:724px" width="11" height="6" viewBox="0 0 10 5" preserveAspectRatio="none"><path d="M0 0H10L5 5Z" fill="#25262f"/></svg><svg style="position:absolute;left:172px;top:718px" width="18" height="18" viewBox="0 0 18 18"><rect width="18" height="18" rx="3" fill="#8852dd"/><path d="M8.4 3.8 L5.2 9.6 L8.8 10.2 L9.3 13.9 L12.8 8.3 L9.2 7.8 Z" fill="#fff" stroke="#fff" stroke-width="0.9" stroke-linejoin="round"/></svg><div class="t" style="left:202px;top:702px;font-size:17px;line-height:51px;color:#2b2c37;text-decoration:underline;text-underline-offset:1px;text-decoration-thickness:1px">Checkout Functionality</div><svg style="position:absolute;left:459px;top:717px" width="20" height="20" viewBox="0 0 20 20"><use href="#av4"/></svg><div class="t" style="left:489px;top:702px;font-size:17px;line-height:51px;color:#2b2c37">Becky Brooks</div><svg style="position:absolute;left:673px;top:724px" width="10" height="5" viewBox="0 0 10 5" preserveAspectRatio="none"><path d="M0 0H10L5 5Z" fill="#9da1ab"/></svg><div class="abs" style="left:700px;top:703px;width:248px;height:47px;background:#fef6e4"></div><div class="t" style="left:714px;top:702px;font-size:17px;line-height:51px;color:#2b2c37">Jess Tryet</div><svg style="position:absolute;left:923px;top:724px" width="10" height="5" viewBox="0 0 10 5" preserveAspectRatio="none"><path d="M0 0H10L5 5Z" fill="#25262f"/></svg><div class="abs" style="left:950px;top:703px;width:243px;height:47px;background:#f7e4ea"></div><div class="t" style="left:964px;top:702px;font-size:17px;line-height:51px;color:#2b2c37">Tiffany Albanese</div><svg style="position:absolute;left:1173px;top:724px" width="10" height="5" viewBox="0 0 10 5" preserveAspectRatio="none"><path d="M0 0H10L5 5Z" fill="#25262f"/></svg><div class="abs" style="left:1193px;top:707px;width:601px;height:40px;background:#5e8fbf;border-radius:6px;border:1px solid rgba(100,96,96,.62);background-clip:padding-box;overflow:hidden"><svg style="position:absolute;left:18px;top:13px" width="16" height="13" viewBox="0 0 16 13"><path d="M0 1.5 C0 .7 .6 0 1.4 0 L5.6 0 C6 0 6.3 .2 6.5 .5 L7.6 2 L14.6 2 C15.4 2 16 2.6 16 3.4 L16 11.6 C16 12.4 15.4 13 14.6 13 L1.4 13 C.6 13 0 12.4 0 11.6 Z" fill="#fff"/></svg><div class="t" style="left:46px;top:0px;font-size:17.5px;line-height:40px;color:#fff">Checkout Functionality</div></div><div class="abs" style="left:14px;top:752px;width:1179px;height:49px;background:#f7f7f7"></div><div class="abs" style="left:1202px;top:752px;width:620px;height:49px;background:#f7f7f7"></div><div class="abs" style="left:14px;top:801px;width:1179px;height:1px;background:#e2e3e9"></div><div class="abs" style="left:1202px;top:801px;width:620px;height:1px;background:#e2e3e9"></div><div class="abs" style="left:98px;top:752px;width:1px;height:49px;background:#e1e2e8"></div><div class="abs" style="left:448px;top:752px;width:1px;height:49px;background:#e1e2e8"></div><div class="abs" style="left:698px;top:752px;width:1px;height:49px;background:#e1e2e8"></div><div class="abs" style="left:948px;top:752px;width:1px;height:49px;background:#e1e2e8"></div><div class="abs" style="left:1343px;top:752px;width:1px;height:49px;background:#e1e2e8"></div><div class="abs" style="left:1493px;top:752px;width:1px;height:49px;background:#e1e2e8"></div><div class="abs" style="left:1643px;top:752px;width:1px;height:49px;background:#e1e2e8"></div><div class="abs" style="left:1793px;top:752px;width:1px;height:49px;background:#e1e2e8"></div><div class="t" style="left:14px;top:752px;width:84px;text-align:center;font-size:17px;line-height:51px;color:#2b2c37">2.1</div><svg style="position:absolute;left:195px;top:768px" width="18" height="18" viewBox="0 0 18 18"><rect width="18" height="18" rx="3" fill="#6aaae6"/><path d="M4.4 9.3 L7.6 12.3 L13.6 5.3" stroke="#fff" stroke-width="2.6" fill="none"/></svg><div class="t" style="left:225px;top:752px;font-size:17px;line-height:51px;color:#2b2c37;text-decoration:underline;text-underline-offset:1px;text-decoration-thickness:1px">UAT</div><svg style="position:absolute;left:450px;top:752px" width="11" height="11"><path d="M0 0H10.5L0 10.5Z" fill="#f5c63f"/></svg><svg style="position:absolute;left:459px;top:767px" width="20" height="20" viewBox="0 0 20 20"><use href="#av0"/></svg><div class="t" style="left:489px;top:752px;font-size:17px;line-height:51px;color:#2b2c37">Halden Pfearsen</div><svg style="position:absolute;left:673px;top:774px" width="10" height="5" viewBox="0 0 10 5" preserveAspectRatio="none"><path d="M0 0H10L5 5Z" fill="#9da1ab"/></svg><div class="abs" style="left:700px;top:753px;width:248px;height:47px;background:#fef6e4"></div><div class="t" style="left:714px;top:752px;font-size:17px;line-height:51px;color:#2b2c37">Jess Tryet</div><svg style="position:absolute;left:923px;top:774px" width="10" height="5" viewBox="0 0 10 5" preserveAspectRatio="none"><path d="M0 0H10L5 5Z" fill="#25262f"/></svg><div class="abs" style="left:950px;top:753px;width:243px;height:47px;background:#e8eef9"></div><div class="t" style="left:964px;top:752px;font-size:17px;line-height:51px;color:#2b2c37">Sarah Capaldi</div><svg style="position:absolute;left:1173px;top:774px" width="10" height="5" viewBox="0 0 10 5" preserveAspectRatio="none"><path d="M0 0H10L5 5Z" fill="#25262f"/></svg><div class="abs" style="left:1674px;top:757px;width:120px;height:40px;background:#5e8fbf;border-radius:6px;border:1px solid rgba(100,96,96,.62);background-clip:padding-box;overflow:hidden"><div class="t" style="left:13px;top:0px;font-size:17.5px;line-height:40px;color:#fff">UAT</div></div><div class="abs" style="left:14px;top:802px;width:1179px;height:49px;background:#f7f7f7"></div><div class="abs" style="left:1202px;top:802px;width:620px;height:49px;background:#f7f7f7"></div><div class="abs" style="left:14px;top:851px;width:1179px;height:1px;background:#e2e3e9"></div><div class="abs" style="left:1202px;top:851px;width:620px;height:1px;background:#e2e3e9"></div><div class="abs" style="left:98px;top:802px;width:1px;height:49px;background:#e1e2e8"></div><div class="abs" style="left:448px;top:802px;width:1px;height:49px;background:#e1e2e8"></div><div class="abs" style="left:698px;top:802px;width:1px;height:49px;background:#e1e2e8"></div><div class="abs" style="left:948px;top:802px;width:1px;height:49px;background:#e1e2e8"></div><div class="abs" style="left:1343px;top:802px;width:1px;height:49px;background:#e1e2e8"></div><div class="abs" style="left:1493px;top:802px;width:1px;height:49px;background:#e1e2e8"></div><div class="abs" style="left:1643px;top:802px;width:1px;height:49px;background:#e1e2e8"></div><div class="abs" style="left:1793px;top:802px;width:1px;height:49px;background:#e1e2e8"></div><div class="t" style="left:14px;top:802px;width:84px;text-align:center;font-size:17px;line-height:51px;color:#2b2c37">2.2</div><svg style="position:absolute;left:195px;top:818px" width="18" height="18" viewBox="0 0 18 18"><rect width="18" height="18" rx="3" fill="#6aaae6"/><path d="M4.4 9.3 L7.6 12.3 L13.6 5.3" stroke="#fff" stroke-width="2.6" fill="none"/></svg><div class="t" style="left:225px;top:802px;font-size:17px;line-height:51px;color:#2b2c37;text-decoration:underline;text-underline-offset:1px;text-decoration-thickness:1px">Stripe Connector</div><svg style="position:absolute;left:450px;top:802px" width="11" height="11"><path d="M0 0H10.5L0 10.5Z" fill="#f5c63f"/></svg><svg style="position:absolute;left:459px;top:817px" width="20" height="20" viewBox="0 0 20 20"><use href="#av2"/></svg><div class="t" style="left:489px;top:802px;font-size:17px;line-height:51px;color:#2b2c37">Samuel Batista</div><svg style="position:absolute;left:673px;top:824px" width="10" height="5" viewBox="0 0 10 5" preserveAspectRatio="none"><path d="M0 0H10L5 5Z" fill="#9da1ab"/></svg><div class="abs" style="left:700px;top:803px;width:248px;height:47px;background:#fef6e4"></div><div class="t" style="left:714px;top:802px;font-size:17px;line-height:51px;color:#2b2c37">Jess Tryet</div><svg style="position:absolute;left:923px;top:824px" width="10" height="5" viewBox="0 0 10 5" preserveAspectRatio="none"><path d="M0 0H10L5 5Z" fill="#25262f"/></svg><div class="abs" style="left:950px;top:803px;width:243px;height:47px;background:#f8ecbb"></div><div class="t" style="left:964px;top:802px;font-size:17px;line-height:51px;color:#2b2c37">Samuel Batista</div><svg style="position:absolute;left:1173px;top:824px" width="10" height="5" viewBox="0 0 10 5" preserveAspectRatio="none"><path d="M0 0H10L5 5Z" fill="#25262f"/></svg><div class="abs" style="left:1554px;top:807px;width:90px;height:40px;background:#5e8fbf;border-radius:6px;border:1px solid rgba(100,96,96,.62);background-clip:padding-box;overflow:hidden"><div class="t" style="left:13px;top:0px;font-size:17.5px;line-height:40px;color:#fff">Stripe …</div></div><div class="abs" style="left:14px;top:852px;width:1179px;height:49px;background:#f7f7f7"></div><div class="abs" style="left:1202px;top:852px;width:620px;height:49px;background:#f7f7f7"></div><div class="abs" style="left:14px;top:901px;width:1179px;height:1px;background:#e2e3e9"></div><div class="abs" style="left:1202px;top:901px;width:620px;height:1px;background:#e2e3e9"></div><div class="abs" style="left:98px;top:852px;width:1px;height:49px;background:#e1e2e8"></div><div class="abs" style="left:448px;top:852px;width:1px;height:49px;background:#e1e2e8"></div><div class="abs" style="left:698px;top:852px;width:1px;height:49px;background:#e1e2e8"></div><div class="abs" style="left:948px;top:852px;width:1px;height:49px;background:#e1e2e8"></div><div class="abs" style="left:1343px;top:852px;width:1px;height:49px;background:#e1e2e8"></div><div class="abs" style="left:1493px;top:852px;width:1px;height:49px;background:#e1e2e8"></div><div class="abs" style="left:1643px;top:852px;width:1px;height:49px;background:#e1e2e8"></div><div class="abs" style="left:1793px;top:852px;width:1px;height:49px;background:#e1e2e8"></div><div class="t" style="left:14px;top:852px;width:84px;text-align:center;font-size:17px;line-height:51px;color:#2b2c37">2.3</div><svg style="position:absolute;left:162px;top:874px" width="11" height="6" viewBox="0 0 10 5" preserveAspectRatio="none"><path d="M0 0H10L5 5Z" fill="#25262f"/></svg><svg style="position:absolute;left:195px;top:868px" width="18" height="18" viewBox="0 0 18 18"><rect width="18" height="18" rx="3" fill="#78b843"/><path d="M5.3 4 H12.8 V14.2 L9 10.8 L5.3 14.2 Z" fill="#fff"/></svg><div class="t" style="left:225px;top:852px;font-size:17px;line-height:51px;color:#2b2c37;text-decoration:underline;text-underline-offset:1px;text-decoration-thickness:1px">Merchant Portal</div><svg style="position:absolute;left:450px;top:852px" width="11" height="11"><path d="M0 0H10.5L0 10.5Z" fill="#f5c63f"/></svg><svg style="position:absolute;left:459px;top:867px" width="20" height="20" viewBox="0 0 20 20"><use href="#av0"/></svg><div class="t" style="left:489px;top:852px;font-size:17px;line-height:51px;color:#2b2c37">Halden Pfearsen</div><svg style="position:absolute;left:673px;top:874px" width="10" height="5" viewBox="0 0 10 5" preserveAspectRatio="none"><path d="M0 0H10L5 5Z" fill="#9da1ab"/></svg><div class="abs" style="left:700px;top:853px;width:248px;height:47px;background:#fef6e4"></div><div class="t" style="left:714px;top:852px;font-size:17px;line-height:51px;color:#2b2c37">Jess Tryet</div><svg style="position:absolute;left:923px;top:874px" width="10" height="5" viewBox="0 0 10 5" preserveAspectRatio="none"><path d="M0 0H10L5 5Z" fill="#25262f"/></svg><div class="abs" style="left:950px;top:853px;width:243px;height:47px;background:#f8ecbb"></div><div class="t" style="left:964px;top:852px;font-size:17px;line-height:51px;color:#2b2c37">Samuel Batista</div><svg style="position:absolute;left:1173px;top:874px" width="10" height="5" viewBox="0 0 10 5" preserveAspectRatio="none"><path d="M0 0H10L5 5Z" fill="#25262f"/></svg><div class="abs" style="left:1404px;top:857px;width:300px;height:40px;background:#5e8fbf;border-radius:6px;border:1px solid rgba(100,96,96,.62);background-clip:padding-box;overflow:hidden"><svg style="position:absolute;left:18px;top:13px" width="16" height="13" viewBox="0 0 16 13"><path d="M0 1.5 C0 .7 .6 0 1.4 0 L5.6 0 C6 0 6.3 .2 6.5 .5 L7.6 2 L14.6 2 C15.4 2 16 2.6 16 3.4 L16 11.6 C16 12.4 15.4 13 14.6 13 L1.4 13 C.6 13 0 12.4 0 11.6 Z" fill="#fff"/></svg><div class="t" style="left:46px;top:0px;font-size:17.5px;line-height:40px;color:#fff">Merchant Portal</div></div><div class="abs" style="left:14px;top:902px;width:1179px;height:49px;background:#f7f7f7"></div><div class="abs" style="left:1202px;top:902px;width:620px;height:49px;background:#f7f7f7"></div><div class="abs" style="left:14px;top:951px;width:1179px;height:1px;background:#e2e3e9"></div><div class="abs" style="left:1202px;top:951px;width:620px;height:1px;background:#e2e3e9"></div><div class="abs" style="left:98px;top:902px;width:1px;height:49px;background:#e1e2e8"></div><div class="abs" style="left:448px;top:902px;width:1px;height:49px;background:#e1e2e8"></div><div class="abs" style="left:698px;top:902px;width:1px;height:49px;background:#e1e2e8"></div><div class="abs" style="left:948px;top:902px;width:1px;height:49px;background:#e1e2e8"></div><div class="abs" style="left:1343px;top:902px;width:1px;height:49px;background:#e1e2e8"></div><div class="abs" style="left:1493px;top:902px;width:1px;height:49px;background:#e1e2e8"></div><div class="abs" style="left:1643px;top:902px;width:1px;height:49px;background:#e1e2e8"></div><div class="abs" style="left:1793px;top:902px;width:1px;height:49px;background:#e1e2e8"></div><div class="t" style="left:14px;top:902px;width:84px;text-align:center;font-size:17px;line-height:51px;color:#2b2c37">2.3.1</div><svg style="position:absolute;left:217px;top:918px" width="18" height="18" viewBox="0 0 18 18"><rect width="18" height="18" rx="3" fill="#6aaae6"/><rect x="3.9" y="3.9" width="6.9" height="7" rx="1.6" fill="none" stroke="#d6e8fa" stroke-width="1.6"/><rect x="6.7" y="6.9" width="8.1" height="7.7" rx="1.6" fill="#fff"/></svg><div class="t" style="left:247px;top:902px;font-size:17px;line-height:51px;color:#2b2c37;text-decoration:underline;text-underline-offset:1px;text-decoration-thickness:1px">Permissions Panel</div><svg style="position:absolute;left:450px;top:902px" width="11" height="11"><path d="M0 0H10.5L0 10.5Z" fill="#f5c63f"/></svg><svg style="position:absolute;left:459px;top:917px" width="20" height="20" viewBox="0 0 20 20"><use href="#av4"/></svg><div class="t" style="left:489px;top:902px;font-size:17px;line-height:51px;color:#2b2c37">Becky Brooks</div><svg style="position:absolute;left:673px;top:924px" width="10" height="5" viewBox="0 0 10 5" preserveAspectRatio="none"><path d="M0 0H10L5 5Z" fill="#9da1ab"/></svg><div class="abs" style="left:700px;top:903px;width:248px;height:47px;background:#fef6e4"></div><div class="t" style="left:714px;top:902px;font-size:17px;line-height:51px;color:#2b2c37">Jess Tryet</div><svg style="position:absolute;left:923px;top:924px" width="10" height="5" viewBox="0 0 10 5" preserveAspectRatio="none"><path d="M0 0H10L5 5Z" fill="#25262f"/></svg><div class="abs" style="left:950px;top:903px;width:243px;height:47px;background:#e1e2e7"></div><div class="t" style="left:964px;top:902px;font-size:17px;line-height:51px;color:#2b2c37">Arthur Heo</div><svg style="position:absolute;left:1173px;top:924px" width="10" height="5" viewBox="0 0 10 5" preserveAspectRatio="none"><path d="M0 0H10L5 5Z" fill="#25262f"/></svg><div class="abs" style="left:1374px;top:907px;width:210px;height:40px;background:#5e8fbf;border-radius:6px;border:1px solid rgba(100,96,96,.62);background-clip:padding-box;overflow:hidden"><div class="t" style="left:13px;top:0px;font-size:17.5px;line-height:40px;color:#fff">Permissions Panel</div></div><div class="abs" style="left:14px;top:952px;width:1179px;height:49px;background:#f7f7f7"></div><div class="abs" style="left:1202px;top:952px;width:620px;height:49px;background:#f7f7f7"></div><div class="abs" style="left:14px;top:1001px;width:1179px;height:1px;background:#e2e3e9"></div><div class="abs" style="left:1202px;top:1001px;width:620px;height:1px;background:#e2e3e9"></div><div class="abs" style="left:98px;top:952px;width:1px;height:49px;background:#e1e2e8"></div><div class="abs" style="left:448px;top:952px;width:1px;height:49px;background:#e1e2e8"></div><div class="abs" style="left:698px;top:952px;width:1px;height:49px;background:#e1e2e8"></div><div class="abs" style="left:948px;top:952px;width:1px;height:49px;background:#e1e2e8"></div><div class="abs" style="left:1343px;top:952px;width:1px;height:49px;background:#e1e2e8"></div><div class="abs" style="left:1493px;top:952px;width:1px;height:49px;background:#e1e2e8"></div><div class="abs" style="left:1643px;top:952px;width:1px;height:49px;background:#e1e2e8"></div><div class="abs" style="left:1793px;top:952px;width:1px;height:49px;background:#e1e2e8"></div><div class="t" style="left:14px;top:952px;width:84px;text-align:center;font-size:17px;line-height:51px;color:#2b2c37">2.3.2</div><svg style="position:absolute;left:217px;top:968px" width="18" height="18" viewBox="0 0 18 18"><rect width="18" height="18" rx="3" fill="#6aaae6"/><rect x="3.9" y="3.9" width="6.9" height="7" rx="1.6" fill="none" stroke="#d6e8fa" stroke-width="1.6"/><rect x="6.7" y="6.9" width="8.1" height="7.7" rx="1.6" fill="#fff"/></svg><div class="t" style="left:247px;top:952px;font-size:17px;line-height:51px;color:#2b2c37;text-decoration:underline;text-underline-offset:1px;text-decoration-thickness:1px">Designs</div><svg style="position:absolute;left:450px;top:952px" width="11" height="11"><path d="M0 0H10.5L0 10.5Z" fill="#f5c63f"/></svg><svg style="position:absolute;left:459px;top:967px" width="20" height="20" viewBox="0 0 20 20"><use href="#av4"/></svg><div class="t" style="left:489px;top:952px;font-size:17px;line-height:51px;color:#2b2c37">Becky Brooks</div><svg style="position:absolute;left:673px;top:974px" width="10" height="5" viewBox="0 0 10 5" preserveAspectRatio="none"><path d="M0 0H10L5 5Z" fill="#9da1ab"/></svg><div class="abs" style="left:700px;top:953px;width:248px;height:47px;background:#fef6e4"></div><div class="t" style="left:714px;top:952px;font-size:17px;line-height:51px;color:#2b2c37">Jess Tryet</div><svg style="position:absolute;left:923px;top:974px" width="10" height="5" viewBox="0 0 10 5" preserveAspectRatio="none"><path d="M0 0H10L5 5Z" fill="#25262f"/></svg><div class="abs" style="left:950px;top:953px;width:243px;height:47px;background:#f2e4f5"></div><div class="t" style="left:964px;top:952px;font-size:17px;line-height:51px;color:#2b2c37">Joe Chan</div><svg style="position:absolute;left:1173px;top:974px" width="10" height="5" viewBox="0 0 10 5" preserveAspectRatio="none"><path d="M0 0H10L5 5Z" fill="#25262f"/></svg><div class="abs" style="left:1193px;top:957px;width:181px;height:40px;background:#5e8fbf;border-radius:6px;border:1px solid rgba(100,96,96,.62);background-clip:padding-box;overflow:hidden"><div class="t" style="left:13px;top:0px;font-size:17.5px;line-height:40px;color:#fff">Designs</div></div><div class="abs" style="left:14px;top:1002px;width:1179px;height:49px;background:#f7f7f7"></div><div class="abs" style="left:1202px;top:1002px;width:620px;height:49px;background:#f7f7f7"></div><div class="abs" style="left:14px;top:1051px;width:1179px;height:1px;background:#e2e3e9"></div><div class="abs" style="left:1202px;top:1051px;width:620px;height:1px;background:#e2e3e9"></div><div class="abs" style="left:98px;top:1002px;width:1px;height:49px;background:#e1e2e8"></div><div class="abs" style="left:448px;top:1002px;width:1px;height:49px;background:#e1e2e8"></div><div class="abs" style="left:698px;top:1002px;width:1px;height:49px;background:#e1e2e8"></div><div class="abs" style="left:948px;top:1002px;width:1px;height:49px;background:#e1e2e8"></div><div class="abs" style="left:1343px;top:1002px;width:1px;height:49px;background:#e1e2e8"></div><div class="abs" style="left:1493px;top:1002px;width:1px;height:49px;background:#e1e2e8"></div><div class="abs" style="left:1643px;top:1002px;width:1px;height:49px;background:#e1e2e8"></div><div class="abs" style="left:1793px;top:1002px;width:1px;height:49px;background:#e1e2e8"></div><div class="t" style="left:14px;top:1002px;width:84px;text-align:center;font-size:17px;line-height:51px;color:#2b2c37">2.3.3</div><svg style="position:absolute;left:217px;top:1018px" width="18" height="18" viewBox="0 0 18 18"><rect width="18" height="18" rx="3" fill="#6aaae6"/><rect x="3.9" y="3.9" width="6.9" height="7" rx="1.6" fill="none" stroke="#d6e8fa" stroke-width="1.6"/><rect x="6.7" y="6.9" width="8.1" height="7.7" rx="1.6" fill="#fff"/></svg><div class="t" style="left:247px;top:1002px;font-size:17px;line-height:51px;color:#2b2c37;text-decoration:underline;text-underline-offset:1px;text-decoration-thickness:1px">Checkout flow</div><svg style="position:absolute;left:450px;top:1002px" width="11" height="11"><path d="M0 0H10.5L0 10.5Z" fill="#f5c63f"/></svg><svg style="position:absolute;left:459px;top:1017px" width="20" height="20" viewBox="0 0 20 20"><use href="#av1"/></svg><div class="t" style="left:489px;top:1002px;font-size:17px;line-height:51px;color:#2b2c37">Patrick Shanley</div><svg style="position:absolute;left:673px;top:1024px" width="10" height="5" viewBox="0 0 10 5" preserveAspectRatio="none"><path d="M0 0H10L5 5Z" fill="#9da1ab"/></svg><div class="abs" style="left:700px;top:1003px;width:248px;height:47px;background:#fef6e4"></div><div class="t" style="left:714px;top:1002px;font-size:17px;line-height:51px;color:#2b2c37">Jess Tryet</div><svg style="position:absolute;left:923px;top:1024px" width="10" height="5" viewBox="0 0 10 5" preserveAspectRatio="none"><path d="M0 0H10L5 5Z" fill="#25262f"/></svg><div class="abs" style="left:950px;top:1003px;width:243px;height:47px;background:#f8ecbb"></div><div class="t" style="left:964px;top:1002px;font-size:17px;line-height:51px;color:#2b2c37">Samuel Batista</div><svg style="position:absolute;left:1173px;top:1024px" width="10" height="5" viewBox="0 0 10 5" preserveAspectRatio="none"><path d="M0 0H10L5 5Z" fill="#25262f"/></svg><div class="abs" style="left:1584px;top:1007px;width:316px;height:40px;background:#38786b;border-radius:6px;border:1px solid rgba(100,96,96,.62);background-clip:padding-box;overflow:hidden"><div class="t" style="left:13px;top:0px;font-size:17.5px;line-height:40px;color:#fff">Checkout flow</div></div><div class="abs" style="left:99px;top:302px;width:1094px;height:4px;background:linear-gradient(180deg,rgba(0,0,0,.04),rgba(0,0,0,0))"></div><div class="abs" style="left:1202px;top:302px;width:620px;height:4px;background:linear-gradient(180deg,rgba(0,0,0,.04),rgba(0,0,0,0))"></div><div class="abs" style="left:99px;top:452px;width:1094px;height:4px;background:linear-gradient(180deg,rgba(0,0,0,.04),rgba(0,0,0,0))"></div><div class="abs" style="left:1202px;top:452px;width:620px;height:4px;background:linear-gradient(180deg,rgba(0,0,0,.04),rgba(0,0,0,0))"></div><div class="abs" style="left:99px;top:547px;width:1094px;height:4px;background:linear-gradient(0deg,rgba(0,0,0,.035),rgba(0,0,0,0))"></div><div class="abs" style="left:1202px;top:547px;width:620px;height:4px;background:linear-gradient(0deg,rgba(0,0,0,.035),rgba(0,0,0,0))"></div><div class="abs" style="left:99px;top:602px;width:1094px;height:4px;background:linear-gradient(180deg,rgba(0,0,0,.04),rgba(0,0,0,0))"></div><div class="abs" style="left:1202px;top:602px;width:620px;height:4px;background:linear-gradient(180deg,rgba(0,0,0,.04),rgba(0,0,0,0))"></div><div class="abs" style="left:99px;top:697px;width:1094px;height:4px;background:linear-gradient(0deg,rgba(0,0,0,.035),rgba(0,0,0,0))"></div><div class="abs" style="left:1202px;top:697px;width:620px;height:4px;background:linear-gradient(0deg,rgba(0,0,0,.035),rgba(0,0,0,0))"></div><div class="abs" style="left:99px;top:752px;width:1094px;height:4px;background:linear-gradient(180deg,rgba(0,0,0,.04),rgba(0,0,0,0))"></div><div class="abs" style="left:1202px;top:752px;width:620px;height:4px;background:linear-gradient(180deg,rgba(0,0,0,.04),rgba(0,0,0,0))"></div><div class="abs" style="left:99px;top:902px;width:1094px;height:4px;background:linear-gradient(180deg,rgba(0,0,0,.04),rgba(0,0,0,0))"></div><div class="abs" style="left:1202px;top:902px;width:620px;height:4px;background:linear-gradient(180deg,rgba(0,0,0,.04),rgba(0,0,0,0))"></div><div class="abs" style="left:99px;top:1047px;width:1094px;height:4px;background:linear-gradient(0deg,rgba(0,0,0,.035),rgba(0,0,0,0))"></div><div class="abs" style="left:1202px;top:1047px;width:620px;height:4px;background:linear-gradient(0deg,rgba(0,0,0,.035),rgba(0,0,0,0))"></div><div class="abs" style="left:14px;top:1052px;width:1179px;height:2px;background:#f9f9f9"></div><div class="abs" style="left:1202px;top:1052px;width:620px;height:2px;background:#f9f9f9"></div><div class="abs" style="left:98px;top:1052px;width:1px;height:2px;background:#e1e2e8"></div><div class="abs" style="left:448px;top:1052px;width:1px;height:2px;background:#e1e2e8"></div><div class="abs" style="left:698px;top:1052px;width:1px;height:2px;background:#e1e2e8"></div><div class="abs" style="left:948px;top:1052px;width:1px;height:2px;background:#e1e2e8"></div><div class="abs" style="left:1343px;top:1052px;width:1px;height:2px;background:#e1e2e8"></div><div class="abs" style="left:1493px;top:1052px;width:1px;height:2px;background:#e1e2e8"></div><div class="abs" style="left:1643px;top:1052px;width:1px;height:2px;background:#e1e2e8"></div><div class="abs" style="left:1793px;top:1052px;width:1px;height:2px;background:#e1e2e8"></div><div class="abs" style="left:1193px;top:202px;width:9px;height:852px;background:#e0e0e6"></div><div class="abs" style="left:1180px;top:252px;width:12px;height:165px;border-radius:6px;background:rgba(60,70,65,.22)"></div></div></body></html>
